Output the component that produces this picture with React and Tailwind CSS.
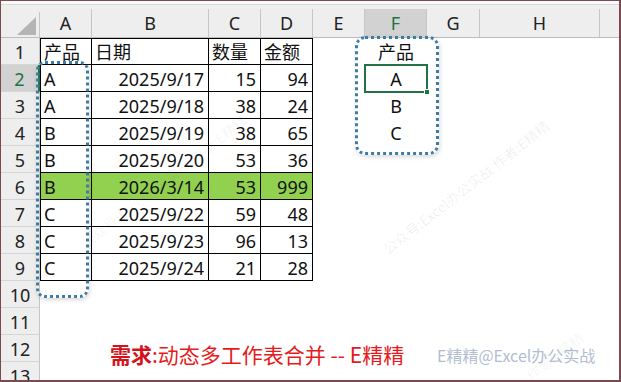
import React from 'react';

const cols = [
  { key: 'A', w: 'w-[52px]' },
  { key: 'B', w: 'w-[117px]' },
  { key: 'C', w: 'w-[52px]' },
  { key: 'D', w: 'w-[52px]' },
  { key: 'E', w: 'w-[52px]' },
  { key: 'F', w: 'w-[62px]' },
  { key: 'G', w: 'w-[53px]' },
  { key: 'H', w: 'w-[120px]' },
  { key: 'I', w: 'flex-1' },
];

const data = [
  ['产品', '日期', '数量', '金额'],
  ['A', '2025/9/17', 15, 94],
  ['A', '2025/9/18', 38, 24],
  ['B', '2025/9/19', 38, 65],
  ['B', '2025/9/20', 53, 36],
  ['B', '2026/3/14', 53, 999],
  ['C', '2025/9/22', 59, 48],
  ['C', '2025/9/23', 96, 13],
  ['C', '2025/9/24', 21, 28],
];

const lookup = { 1: '产品', 2: 'A', 3: 'B', 4: 'C' };

const Cell = ({ row, colIdx, col }) => {
  const inTable = row <= 9 && colIdx < 4;
  const value = inTable ? data[row - 1][colIdx] : null;
  const isHeader = row === 1;
  const right = inTable && !isHeader && colIdx > 0;
  const green = row === 6 && inTable;

  let cls = `${col.w} shrink-0 h-full flex items-center pt-[2px] relative `;
  if (inTable) {
    cls += 'border-r border-b border-black ';
    if (colIdx === 0) cls += 'border-l ';
    if (isHeader) cls += 'border-t ';
    cls += right ? 'justify-end pr-[4px] ' : 'justify-start pl-[3px] ';
  }
  if (green) cls += 'bg-[#92d050] ';

  if (col.key === 'F' && lookup[row]) {
    return (
      <div className={`${col.w} shrink-0 h-full flex items-center justify-center pt-[2px] relative`}>
        {lookup[row]}
        {row === 2 && (
          <div className="absolute -left-px -top-px w-[64px] h-[29px] border-2 border-[#217346]">
            <div className="absolute -right-[4px] -bottom-[4px] w-[6px] h-[6px] bg-[#217346] border border-white" />
          </div>
        )}
      </div>
    );
  }

  if (row === 12 && col.key === 'B') {
    return (
      <div className={`${col.w} shrink-0 h-full flex items-start pt-[7px] pl-[18px] relative`}>
        <span className="whitespace-nowrap text-[21px] leading-[24px] text-[#e61b21] font-['Noto_Sans_CJK_SC',sans-serif]">
          <span className="font-bold text-[#d3121a]">需求</span>:动态多工作表合并 -- E精精
        </span>
      </div>
    );
  }

  return <div className={cls}>{value}</div>;
};

const App = () => {
  const rows = Array.from({ length: 13 }, (_, i) => i + 1);

  return (
    <div className="w-[621px] h-[382px] relative overflow-hidden bg-white border-l border-t border-r-2 border-b-2 border-[#7a4a50] text-[18px] text-[#111] font-['Noto_Sans','Noto_Sans_CJK_SC',sans-serif]">
      {/* column header */}
      <div className="h-[3px] bg-[#fafafa]" />
      <div className="h-px bg-[#d9d9d9]" />
      <div className="h-[33px] flex bg-[#eeeeee] border-b border-[#bdbdbd]">
        <div className="w-[39px] shrink-0 flex flex-col">
          <div className="h-[7px]" />
          <div className="flex-1 border-r border-[#c6c6c6] flex items-end justify-end pr-[3px] pb-[2px]">
            <svg width="19" height="18" viewBox="0 0 19 18">
              <polygon points="19,0 19,18 0,18" fill="#b4b4b4" />
            </svg>
          </div>
        </div>
        {cols.map((c) => (
          <div key={c.key} className={`${c.w} shrink-0 flex flex-col`}>
            <div className="h-[7px]" />
            <div
              className={`flex-1 flex items-center justify-center pt-[1px] ${
                c.key === 'I' ? '' : 'border-r border-[#c6c6c6]'
              } ${c.key === 'F' ? 'bg-[#d2d2d2] text-[#217346]' : 'text-[#222]'}`}
            >
              {c.key === 'I' ? '' : c.key}
            </div>
          </div>
        ))}
      </div>

      {/* rows */}
      {rows.map((r) => (
        <div key={r} className="h-[27px] flex">
          <div
            className={`w-[39px] shrink-0 flex items-center justify-center pt-[2px] border-b border-[#d6d6d6] ${
              r === 2
                ? 'bg-[#d2d2d2] text-[#217346] border-r-2 border-r-[#217346]'
                : 'bg-[#eeeeee] text-[#222] border-r border-r-[#c6c6c6]'
            }`}
          >
            {r}
          </div>
          {cols.map((c, i) => (
            <Cell key={c.key} row={r} colIdx={i} col={c} />
          ))}
        </div>
      ))}

      {/* dotted highlight frames */}
      <div className="absolute left-[35px] top-[60px] w-[53px] h-[237px] rounded-[9px] border-[3px] border-dotted border-[#3d7ca3] shadow-[1px_2px_4px_rgba(0,0,0,0.15)]" />
      <div className="absolute left-[354px] top-[35px] w-[84px] h-[119px] rounded-[10px] border-[3px] border-dotted border-[#3d7ca3] shadow-[1px_2px_4px_rgba(0,0,0,0.15)]" />

      {/* watermarks */}
      <div className="absolute left-[436px] top-[343px] text-[16px] leading-[22px] text-[#b3bdd1] whitespace-nowrap font-['Noto_Sans_CJK_SC',sans-serif]">
        E精精@Excel办公实战
      </div>
      <div className="absolute left-[362px] top-[176px] -rotate-[38deg] text-[14px] text-black/[0.07] whitespace-nowrap font-['Noto_Sans_CJK_SC',sans-serif]">
        公众号:Excel办公实战 作者:E精精
      </div>
      <div className="absolute left-[60px] top-[170px] -rotate-[38deg] text-[14px] text-black/[0.05] whitespace-nowrap font-['Noto_Sans_CJK_SC',sans-serif]">
        公众号:Excel办公实战 作者:E精精
      </div>
      <div className="absolute left-[520px] top-[345px] -rotate-[38deg] text-[14px] text-black/[0.05] whitespace-nowrap font-['Noto_Sans_CJK_SC',sans-serif]">
        作者:E精精
      </div>
    </div>
  );
};

export default App;
